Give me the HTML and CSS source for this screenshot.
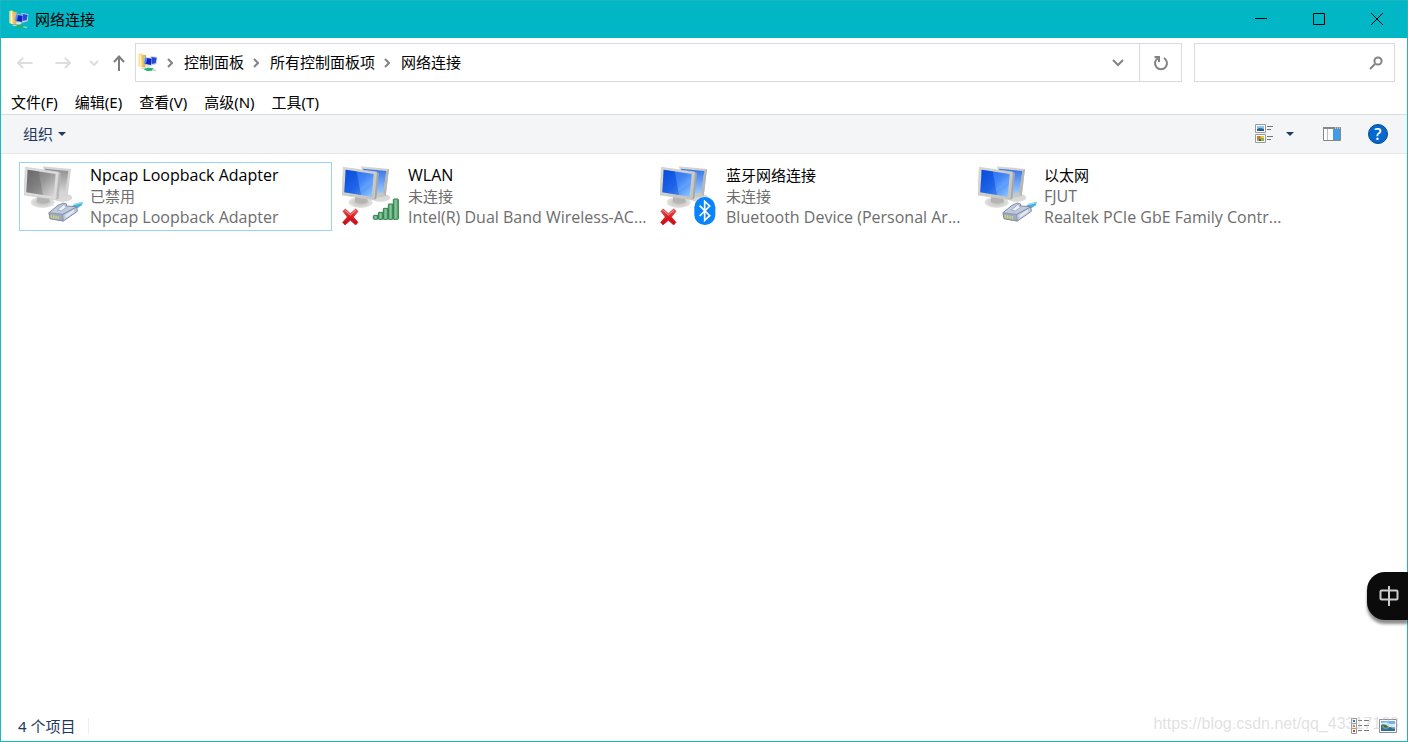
FILE: index.html
```html
<!DOCTYPE html>
<html lang="zh-CN">
<head>
<meta charset="utf-8">
<title>网络连接</title>
<link rel="stylesheet" href="styles.css">
</head>
<body>
<svg class="defs" aria-hidden="true">
  <defs>
    <linearGradient id="blue" x1="0" y1="0" x2="1" y2="1"><stop offset="0" stop-color="#0a50e4"/><stop offset=".5" stop-color="#2c78f6"/><stop offset="1" stop-color="#98ccff"/></linearGradient>
    <linearGradient id="blueBack" x1="0" y1="0" x2="0" y2="1"><stop offset="0" stop-color="#3472ec"/><stop offset="1" stop-color="#9ccafc"/></linearGradient>
    <linearGradient id="gray" x1="0" y1="0" x2="1" y2="1"><stop offset="0" stop-color="#6e6e6e"/><stop offset=".5" stop-color="#979797"/><stop offset="1" stop-color="#dedede"/></linearGradient>
    <linearGradient id="grayBack" x1="0" y1="0" x2="0" y2="1"><stop offset="0" stop-color="#8d8d8d"/><stop offset="1" stop-color="#d8d8d8"/></linearGradient>
    <linearGradient id="frame" x1="0" y1="0" x2="1" y2="1"><stop offset="0" stop-color="#d9d9d6"/><stop offset="1" stop-color="#c2c2be"/></linearGradient>
    <radialGradient id="base"><stop offset="0" stop-color="#b9b9b7"/><stop offset=".7" stop-color="#d6d6d4"/><stop offset="1" stop-color="#e4e4e2"/></radialGradient>
    <linearGradient id="bar" x1="0" y1="0" x2="1" y2="0"><stop offset="0" stop-color="#4b9c68"/><stop offset=".5" stop-color="#8cc89f"/><stop offset="1" stop-color="#479461"/></linearGradient>
    <linearGradient id="red" x1="0" y1="0" x2="0" y2="1"><stop offset="0" stop-color="#ee5a5a"/><stop offset=".5" stop-color="#da1a20"/><stop offset="1" stop-color="#c80d14"/></linearGradient>
    <linearGradient id="gold" x1="0" y1="0" x2="1" y2="0"><stop offset="0" stop-color="#fbe9a4"/><stop offset="1" stop-color="#dba93c"/></linearGradient>
    <symbol id="stands" viewBox="0 0 180 180">
      <ellipse cx="116" cy="98" rx="29" ry="12" fill="#d9d9d7"/>
      <ellipse cx="56" cy="112" rx="36" ry="17" fill="url(#base)"/>
      <path d="M40 90 74 95 78 112Q58 120 38 110Z" fill="#b4b4b2"/>
    </symbol>
    <symbol id="pair" viewBox="0 0 180 180">
      <use href="#stands"/>
      <path d="M56 4 141 12 131 94 92 100Z" fill="url(#frame)"/>
      <path d="M62 11 133 18 124 83 98 86Z" fill="url(#blueBack)"/>
      <path d="M133 18 141 12 131 94 124 83Z" fill="#b6b6b2"/>
      <path d="M104 21 111 24 103 101 96 104Z" fill="#a6a6a2"/>
      <path d="M4 7 104 21 96 104 0 90Z" fill="url(#frame)" stroke="#cacac7" stroke-width="2"/>
      <path d="M11 14 95 27 89 95 7 82Z" fill="url(#blue)"/>
      <path d="M11 14 44 19 57 90 7 82Z" fill="#0640cc" opacity=".35"/>
      <path d="M44 19 95 27 93 50 55 80Z" fill="#fff" opacity=".1"/>
    </symbol>
    <symbol id="pairOff" viewBox="0 0 180 180">
      <use href="#stands"/>
      <path d="M56 4 141 12 131 94 92 100Z" fill="#d5d5d5"/>
      <path d="M62 11 133 18 124 83 98 86Z" fill="url(#grayBack)"/>
      <path d="M104 21 111 24 103 101 96 104Z" fill="#b4b4b4"/>
      <path d="M4 7 104 21 96 104 0 90Z" fill="#dcdcdc" stroke="#cacaca" stroke-width="2"/>
      <path d="M11 14 95 27 89 95 7 82Z" fill="url(#gray)"/>
      <path d="M11 14 44 19 57 90 7 82Z" fill="#555" opacity=".3"/>
    </symbol>
    <symbol id="plug" viewBox="0 0 180 180">
      <path d="M142 126 152 116 178 110 173 121 160 130Z" fill="#45b4dc"/>
      <path d="M150 119 176 112" stroke="#9be0f4" stroke-width="4"/>
      <path d="M75 143 102 121 118 114 128 117 128 123 158 125 160 139 118 168 78 161Z" fill="#c0ccde" stroke="#7f8da3" stroke-width="3" stroke-linejoin="round"/>
      <path d="M75 143 116 148 118 168 78 161Z" fill="#9dabc2" stroke="#78869d" stroke-width="2"/>
      <path d="M116 148 158 126" stroke="#78869d" stroke-width="3"/>
      <path d="M100 135 120 118 127 127 112 138Z" fill="#eef3fb" stroke="#8393ad" stroke-width="2"/>
      <path d="M124 151 150 133 150 142 126 158Z" fill="#e3e9f3"/>
      <path d="M82 150 82 160M89 151 89 161M96 152 96 162M103 153 103 163" stroke="#dcd268" stroke-width="4"/>
    </symbol>
    <symbol id="cross" viewBox="0 0 180 180">
      <path d="M3 139 10 132 25 146 41 132 48 139 34 156 48 172 41 180 25 166 9 180 2 172 16 156Z" fill="url(#red)" stroke="#c5161c" stroke-width="2" stroke-linejoin="round"/>
      <path d="M10 136 25 150 41 136" fill="none" stroke="#f7a0a0" stroke-width="3"/>
    </symbol>
    <symbol id="signal" viewBox="0 0 180 180">
      <g fill="url(#bar)" stroke="#2e7d4b" stroke-width="3">
        <rect x="94" y="151" width="14" height="12" rx="3"/><rect x="109" y="142" width="14" height="21" rx="2"/><rect x="124" y="130" width="14" height="33" rx="2"/><rect x="139" y="117" width="14" height="46" rx="2"/><rect x="154" y="102" width="15" height="61" rx="2"/>
      </g>
    </symbol>
    <symbol id="bluetooth" viewBox="0 0 180 180">
      <rect x="103" y="96" width="63" height="84" rx="31" fill="#0a84fb"/>
      <path d="M119 122 149 152 134 166 134 109 149 123 119 153" fill="none" stroke="#fff" stroke-width="5"/>
    </symbol>
    <symbol id="netfolder" viewBox="0 0 60 60">
      <path d="M1 3 9 1 14 5 24 6 24 44 8 42 1 39Z" fill="url(#gold)"/>
      <path d="M6 4 9 5 11 43 6 40Z" fill="#fff3c2"/>
      <path d="M37 9 58 12 56 34 40 38Z" fill="#c9d8e8"/>
      <path d="M40 12 56 14 53 31 40 33Z" fill="#2548d8"/>
      <path d="M19 12 42 15 40 38 18 33Z" fill="#b9cde4"/>
      <path d="M21 14 41 17 39 36 20 32Z" fill="#1024c4"/>
      <path d="M21 14 28 15 24 32 20 32Z" fill="#4e8af5"/>
      <ellipse cx="29" cy="40" rx="9" ry="4" fill="#dbe4e8"/>
      <path d="M11 46 24 47" stroke="#c4d2da" stroke-width="4"/>
      <path d="M17 49 30 44 47 46 42 53 27 54Z" fill="#20b268"/>
      <path d="M43 50 54 53" stroke="#b5c6ce" stroke-width="4"/>
    </symbol>
  </defs>
</svg>

<div class="window">
  <header class="titlebar">
    <svg class="app-icon"><use href="#netfolder"/></svg>
    <h1 class="title">网络连接</h1>
    <div class="caption-buttons">
      <button class="caption" aria-label="最小化"><svg viewBox="0 0 12 12"><path d="M0 5.500H12"/></svg></button>
      <button class="caption" aria-label="最大化"><svg viewBox="0 0 12 12"><path d="M.5.5H11.500V11.500H.5Z"/></svg></button>
      <button class="caption" aria-label="关闭"><svg viewBox="0 0 12 12"><path d="M0 0 12 12M12 0 0 12"/></svg></button>
    </div>
  </header>

  <div class="navbar">
    <div class="history">
      <button class="nav-btn" aria-label="后退" disabled><svg width="16" height="12" viewBox="0 0 16 12"><path d="M15.500 6H1M6 1 1 6 6 11"/></svg></button>
      <button class="nav-btn" aria-label="前进" disabled><svg width="16" height="12" viewBox="0 0 16 12"><path d="M.5 6H15M10 1 15 6 10 11"/></svg></button>
      <button class="nav-btn recent" aria-label="最近的位置" disabled><svg width="10" height="6" viewBox="0 0 10 6"><path d="M1 1 5 5 9 1"/></svg></button>
      <button class="nav-btn up" aria-label="向上"><svg width="14" height="16" viewBox="0 0 14 16"><path d="M7 16V2M2 7 7 1.500 12 7"/></svg></button>
    </div>
    <nav class="address" aria-label="地址">
      <svg class="app-icon"><use href="#netfolder"/></svg>
      <svg class="chev" viewBox="0 0 6 10"><path d="M1 1 5 5 1 9"/></svg>
      <a class="crumb" href="#">控制面板</a>
      <svg class="chev" viewBox="0 0 6 10"><path d="M1 1 5 5 1 9"/></svg>
      <a class="crumb" href="#">所有控制面板项</a>
      <svg class="chev" viewBox="0 0 6 10"><path d="M1 1 5 5 1 9"/></svg>
      <a class="crumb" href="#">网络连接</a>
      <button class="addr-btn drop" aria-label="历史记录"><svg width="12" height="8" viewBox="0 0 12 8"><path d="M1 1 6 6 11 1"/></svg></button>
      <button class="addr-btn refresh" aria-label="刷新"><svg width="16" height="16" viewBox="0 0 16 16"><path d="M11 3A6 6 0 1 1 5 3M1.500 2H6V7"/></svg></button>
    </nav>
    <div class="search">
      <input class="search-input" type="search" aria-label="搜索">
      <svg width="14" height="14" viewBox="0 0 14 14"><circle cx="9" cy="5" r="3.600"/><path d="M6 8 1 13"/></svg>
    </div>
  </div>

  <div class="menubar">
    <button class="menu">文件(F)</button>
    <button class="menu">编辑(E)</button>
    <button class="menu">查看(V)</button>
    <button class="menu">高级(N)</button>
    <button class="menu">工具(T)</button>
  </div>

  <div class="toolbar">
    <button class="organize">组织 <svg width="8" height="4" viewBox="0 0 8 4"><path d="M0 0H8L4 4Z"/></svg></button>
    <div class="tools">
      <button class="tool" aria-label="更改视图"><svg width="18" height="20" viewBox="0 0 18 20"><path d="M.5.5H10.500V8.500H.5ZM.5 10.500H10.500V18.500H.5Z" fill="#fff" stroke="#9a9a9a"/><path d="M2 2H9V7H2Z" fill="#8fc5f3"/><path d="M2 5 5 4 9 5V7H2Z" fill="#25618f"/><path d="M2 12H9V17H2Z" fill="#8ab54c"/><path d="M2 12H5V15H2Z" fill="#e56a35"/><path d="M6 12H9V14H6Z" fill="#f1c54a"/><path d="M4 15H6V17H4Z" fill="#2c7b3c"/><path d="M12 2.500H18M12 5.500H16M12 12.500H18M12 15.500H16" stroke="#777"/></svg></button>
      <button class="tool caret" aria-label="更多选项"><svg width="8" height="4" viewBox="0 0 8 4"><path d="M0 0H8L4 4Z" fill="#1e395b"/></svg></button>
      <button class="tool pane" aria-label="预览窗格"><svg width="18" height="14" viewBox="0 0 18 14"><path d="M.5.500H17.500V13.500H.5Z" fill="#fff" stroke="#868686"/><path d="M0 0H18V2H0Z" fill="#868686"/><path d="M10 2H17V13H10Z" fill="#3f9ce8"/><path d="M4.500 2V13" stroke="#bbb"/><path d="M12 1H13M14 1H15M16 1H17" stroke="#fff"/></svg></button>
      <button class="tool help" aria-label="帮助"><span class="help-mark">?</span></button>
    </div>
  </div>

  <main class="content">
    <article class="item selected" tabindex="0">
      <svg class="item-icon" viewBox="0 0 180 180"><use href="#pairOff"/><use href="#plug"/></svg>
      <div class="item-text"><h2 class="name latin">Npcap Loopback Adapter</h2><p class="line">已禁用</p><p class="line latin">Npcap Loopback Adapter</p></div>
    </article>
    <article class="item" tabindex="0">
      <svg class="item-icon" viewBox="0 0 180 180"><use href="#pair"/><use href="#cross"/><use href="#signal"/></svg>
      <div class="item-text"><h2 class="name latin">WLAN</h2><p class="line">未连接</p><p class="line latin">Intel(R) Dual Band Wireless-AC...</p></div>
    </article>
    <article class="item" tabindex="0">
      <svg class="item-icon" viewBox="0 0 180 180"><use href="#pair"/><use href="#cross"/><use href="#bluetooth"/></svg>
      <div class="item-text"><h2 class="name">蓝牙网络连接</h2><p class="line">未连接</p><p class="line latin">Bluetooth Device (Personal Ar...</p></div>
    </article>
    <article class="item" tabindex="0">
      <svg class="item-icon" viewBox="0 0 180 180"><use href="#pair"/><use href="#plug"/></svg>
      <div class="item-text"><h2 class="name">以太网</h2><p class="line latin">FJUT</p><p class="line latin">Realtek PCIe GbE Family Contr...</p></div>
    </article>
  </main>

  <footer class="statusbar">
    <span class="count">4 个项目</span>
    <div class="views">
      <button class="view" aria-label="详细信息"><svg width="18" height="16" viewBox="0 0 18 16"><path d="M.5.500H5.500V15.500H.5ZM.5 5.500H5.500M.5 10.500H5.500" fill="#fff" stroke="#999"/><path d="M2 2H4V4H2Z" fill="#2d71b8"/><path d="M2 7H4V9H2Z" fill="#b68b22"/><path d="M2 12H4V14H2Z" fill="#cf3b20"/><path d="M7 2.500H11M13 2.500H18M7 7.500H11M13 7.500H18M7 12.500H11M13 12.500H18" stroke="#777"/></svg></button>
      <button class="view" aria-label="大图标"><svg width="18" height="14" viewBox="0 0 18 14"><path d="M.5.500H17.500V13.500H.5Z" fill="#fff" stroke="#8e8e8e"/><path d="M2 2H16V12H2Z" fill="#6eb1f0"/><path d="M2 4 7 3 11 5 16 5V8H2Z" fill="#d9eefb"/><path d="M2 6Q6 4 10 8L16 9V10H2Z" fill="#36745d"/><path d="M2 10H16V12H2Z" fill="#2c70aa"/></svg></button>
    </div>
    <span class="watermark">https://blog.csdn.net/qq_43317133</span>
  </footer>

  <button class="ime" aria-label="中文输入"><svg width="20" height="20" viewBox="0 0 20 20"><rect x="1.500" y="4.500" width="17" height="9" rx="1"/><path d="M10 0V20"/></svg></button>
</div>
</body>
</html>
```
FILE: styles.css
```css
* { box-sizing: border-box; }
body {
  margin: 0;
  font: 15px/21px "Noto Sans", "Noto Sans CJK SC", sans-serif;
  color: #000;
  background: #fff;
}
button { margin: 0; padding: 0; border: 0; background: none; font: inherit; color: inherit; }
svg { display: block; flex: none; }
h1, h2, p { margin: 0; font-size: inherit; font-weight: 400; }
.defs { position: absolute; width: 0; height: 0; }

.window {
  position: relative;
  display: flex;
  flex-direction: column;
  min-height: 100vh;
  border: 1px solid #1cb5c1;
}
.titlebar {
  display: flex;
  align-items: center;
  height: 37px;
  padding-left: 8px;
  background: #02b7c5;
}
.app-icon { width: 20px; height: 20px; }
.title { margin-left: 6px; }
.caption-buttons { display: flex; align-self: stretch; margin-left: auto; padding: 0 1px 1px 0; }
.caption { display: grid; place-items: center; width: 58px; }
.caption svg { width: 12px; height: 12px; fill: none; stroke: #000; }

.navbar { display: flex; align-items: center; padding: 5px 12px 0 16px; }
.history { display: flex; align-items: center; width: 118px; gap: 22px; color: #dedede; }
.nav-btn svg { fill: none; stroke: currentColor; stroke-width: 2; }
.nav-btn.recent { margin-left: -4px; }
.nav-btn.up { margin-left: -9px; color: #7d7d7d; }
.address {
  display: flex;
  align-items: center;
  flex: 1;
  height: 39px;
  padding-left: 2px;
  border: 1px solid #d9d9d9;
}
.chev { width: 6px; height: 10px; margin: 0 11px 0 9px; fill: none; stroke: #838383; stroke-width: 2; }
.crumb { color: #000; text-decoration: none; }
.addr-btn { display: grid; place-items: center; align-self: stretch; width: 42px; }
.addr-btn svg { fill: none; stroke: #838383; stroke-width: 2; }
.drop { margin-left: auto; }
.refresh { border-left: 1px solid #d9d9d9; }
.search {
  display: flex;
  align-items: center;
  width: 201px;
  height: 39px;
  margin-left: 12px;
  padding-right: 11px;
  border: 1px solid #d9d9d9;
}
.search-input { flex: 1; min-width: 0; height: 30px; border: 0; outline: 0; background: none; font: inherit; }
.search svg { fill: none; stroke: #838383; stroke-width: 2; }

.menubar { display: flex; gap: 17px; padding: 10px 10px 1px; }

.toolbar {
  display: flex;
  align-items: center;
  justify-content: space-between;
  height: 40px;
  padding: 0 19px 0 22px;
  border: solid #dadbdc;
  border-width: 1px 0;
  border-bottom-color: #e6e7e8;
  background: #f4f5f7;
  color: #1e395b;
}
.organize { display: flex; align-items: center; gap: 5px; }
.organize svg { fill: #1e395b; }
.tools { display: flex; align-items: center; }
.caret { margin-left: 13px; }
.pane { margin-left: 29px; }
.help {
  display: grid;
  place-items: center;
  width: 20px;
  height: 20px;
  margin-left: 27px;
  border: 1px solid #08498c;
  border-radius: 50%;
  background: #0468cc;
  color: #fff;
}
.help-mark { font: 600 16px/18px "Open Sans", sans-serif; }

.content {
  display: grid;
  grid-template-columns: repeat(auto-fill, 313px);
  align-content: start;
  gap: 5px;
  flex: 1;
  padding: 8px 18px;
}
.item { display: flex; gap: 6px; padding: 2px 4px; border: 1px solid transparent; }
.item.selected { border-color: #99d1ff; }
.item-icon { width: 60px; height: 60px; }
.item-text { min-width: 0; white-space: nowrap; }
.line { color: #6d6d6d; }
.latin { font-family: "Open Sans", "Noto Sans", sans-serif; font-size: 16px; }

.statusbar { position: relative; display: flex; align-items: center; height: 30px; padding: 0 10px 0 17px; color: #1e395b; }
.count { padding-right: 13px; border-right: 1px solid #eee; line-height: 16px; }
.views { display: flex; align-items: center; gap: 10px; margin-left: auto; }
.watermark {
  position: absolute;
  right: 8px;
  bottom: 7px;
  font: 16px/20px "Liberation Sans", Arial, sans-serif;
  color: rgba(195, 195, 195, .5);
  pointer-events: none;
}
.ime {
  position: absolute;
  right: -1px;
  bottom: 121px;
  display: grid;
  place-items: center;
  width: 41px;
  height: 48px;
  padding-left: 2px;
  border-radius: 18px 0 0 18px;
  background: #0b0b0b;
  box-shadow: 0 4px 3px rgba(0, 0, 0, .45);
}
.ime svg { fill: none; stroke: #ccc; stroke-width: 2; }
```
